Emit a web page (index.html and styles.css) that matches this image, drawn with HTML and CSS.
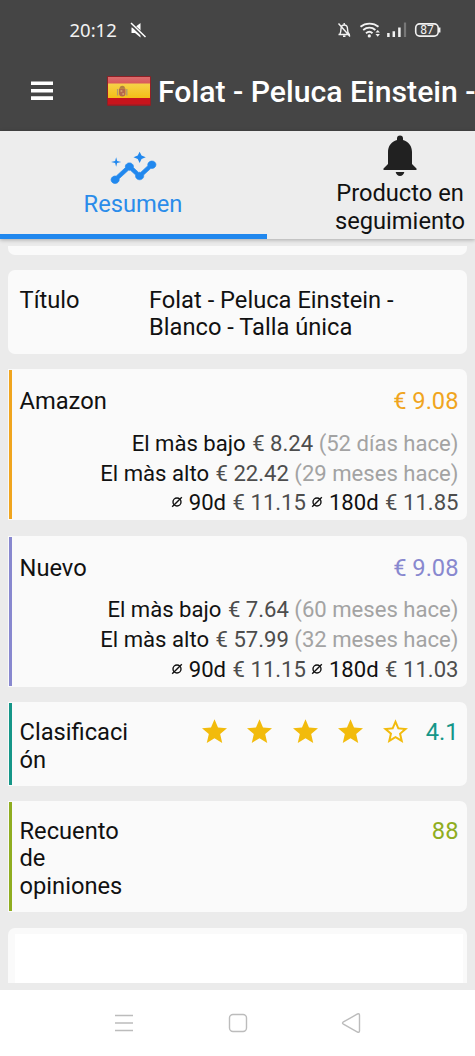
FILE: index.html
```html
<!DOCTYPE html>
<html lang="es">
<head>
<meta charset="utf-8">
<title>Folat - Peluca Einstein</title>
<link rel="stylesheet" href="styles.css">
</head>
<body>
<div class="screen">
  <header class="top">
    <div class="status">
      <span class="clock">20:12</span>
      <svg class="mute" width="17" height="17" viewBox="0 0 17 17"><path d="M1.500 5.500h3.200L10.500 1v14.500L5 11H1.500z" fill="#fff"/><path d="M0 .8 15.500 15.600" stroke="#454545" stroke-width="3.600"/><path d="M1 1 15.500 15" stroke="#fff" stroke-width="1.500"/></svg>
      <svg class="signals" width="106" height="18" viewBox="0 0 106 18" fill="none" stroke="#f2f2f2">
        <path d="M2.500 13.500h11.500M4 13c1-2 .8-3.500 1-5.500C5.200 5.500 6.500 4 8.200 4S11.500 5.500 11.500 8c0 2 .3 3.500 1.500 5M8.200 2v2M2.500 2.500l11.500 13M7 15.200h2.500" stroke-width="1.400"/>
        <path d="M24.500 5.800c5-4.200 13-4.200 18 0M27.200 9c3.800-3 8.700-3 12.200 0M30 12.200c2-1.700 4.700-1.700 6.500 0" stroke-width="1.900"/>
        <circle cx="33.300" cy="14.900" r="1.600" fill="#f2f2f2" stroke="none"/>
        <path d="M39.500 11.500 41.700 9l2.200 2.500zM39.500 13l2.200 2.700 2.200-2.700z" fill="#f2f2f2" stroke="none"/>
        <path d="M52.400 12v4M57.800 10.200V16M63.400 6.500V16" stroke-width="2.500"/>
        <path d="M69 1.500V16" stroke="#777" stroke-width="2.200"/>
        <rect x="79.700" y="2.900" width="22.500" height="12.200" rx="4" stroke-width="1.600"/>
        <path d="M103.700 6.500v5" stroke-width="1.500"/>
        <text x="91" y="13" text-anchor="middle" class="battery">87</text>
      </svg>
    </div>
    <div class="appbar">
      <svg class="burger" width="22" height="20" viewBox="0 0 22 20"><path d="M0 2.200h22M0 9.700h22M0 17.100h22" stroke="#fff" stroke-width="3.600"/></svg>
      <svg class="flag" width="44" height="30" viewBox="0 0 44 30">
        <defs>
          <linearGradient id="red" x2="0" y2="1"><stop stop-color="#dc6c6d"/><stop offset="1" stop-color="#d85758"/></linearGradient>
          <linearGradient id="gold" x2="0" y2="1"><stop stop-color="#f6d249"/><stop offset="1" stop-color="#f4bf16"/></linearGradient>
        </defs>
        <rect width="44" height="30" rx="1" fill="#8f2026"/>
        <path d="M1 1h42v7H1z" fill="url(#red)"/><path d="M1 7.500h42V22H1z" fill="url(#gold)"/><path d="M1 22h42v6.500H1z" fill="#c8141c"/>
        <path d="M12 12.500h6.500v5q0 3-3.200 3T12 17.500z" fill="#b5684c"/><path d="M12.800 11q2.500-2.500 5 0v1.800h-5z" fill="#b08040"/><path d="M10.600 13v6.500M19.800 13v6.500" stroke="#b09a70" stroke-width="1.300"/><path d="M13.500 14h1.800v2h-1.800zM15.300 17h1.800v2h-1.800z" fill="#d09a68"/>
      </svg>
      <h1 class="heading">Folat - Peluca Einstein -</h1>
    </div>
  </header>

  <nav class="tabs">
    <div class="tab active">
      <svg class="insights" width="49" height="45" viewBox="0 0 24 24" preserveAspectRatio="none" fill="currentColor"><path d="M21 8c-1.450 0-2.260 1.440-1.930 2.510l-3.550 3.560c-.3-.09-.74-.09-1.040 0l-2.550-2.550C12.270 10.450 11.460 9 10 9c-1.450 0-2.270 1.440-1.930 2.520l-4.560 4.550C2.440 15.740 1 16.550 1 18c0 1.100.9 2 2 2 1.450 0 2.260-1.440 1.930-2.510l4.550-4.560c.3.090.74.090 1.040 0l2.550 2.550C12.730 16.550 13.540 18 15 18c1.450 0 2.270-1.440 1.930-2.520l3.560-3.550C21.560 12.260 23 11.450 23 10c0-1.100-.9-2-2-2z" stroke="currentColor" stroke-width=".35"/><path d="m15 9 .94-2.070L18 6l-2.060-.93L15 3l-.92 2.070L12 6l2.080.93zM3.500 11 4 9l2-.5L4 8l-.5-2L3 8l-2 .5L3 9z"/></svg>
      <span>Resumen</span>
    </div>
    <div class="tab">
      <svg class="bell" width="34" height="41" viewBox="0 0 34 41" fill="#212121"><path d="M14 5V3.500a3 3 0 0 1 6 0V5c5.700 1.500 9 6.300 9 12v12l4.500 4.500V35H.5v-1.500L5 29V17C5 11.300 8.300 6.500 14 5z"/><path d="M12.700 37h8.600c-.3 2.300-2.100 4-4.300 4s-4-1.700-4.300-4z"/></svg>
      <span>Producto en<br>seguimiento</span>
    </div>
  </nav>

  <main class="content">
    <section class="card previous"></section>
    <section class="card title-card">
      <div class="label">Título</div>
      <div class="value">Folat - Peluca Einstein -<br>Blanco - Talla única</div>
    </section>
    <section class="card price amazon">
      <div class="row"><span>Amazon</span><span class="accent">€ 9.08</span></div>
      <div class="stats">
        <div>El màs bajo <b>€ 8.24</b> <i>(52 días hace)</i></div>
        <div>El màs alto <b>€ 22.42</b> <i>(29 meses hace)</i></div>
        <div><svg class="avg" viewBox="0 0 12 12"><circle cx="6" cy="6" r="4"/><path d="M1.200 10.800 10.800 1.200"/></svg> 90d <b>€ 11.15</b> <svg class="avg" viewBox="0 0 12 12"><circle cx="6" cy="6" r="4"/><path d="M1.200 10.800 10.800 1.200"/></svg> 180d <b>€ 11.85</b></div>
      </div>
    </section>
    <section class="card price new">
      <div class="row"><span>Nuevo</span><span class="accent">€ 9.08</span></div>
      <div class="stats">
        <div>El màs bajo <b>€ 7.64</b> <i>(60 meses hace)</i></div>
        <div>El màs alto <b>€ 57.99</b> <i>(32 meses hace)</i></div>
        <div><svg class="avg" viewBox="0 0 12 12"><circle cx="6" cy="6" r="4"/><path d="M1.200 10.800 10.800 1.200"/></svg> 90d <b>€ 11.15</b> <svg class="avg" viewBox="0 0 12 12"><circle cx="6" cy="6" r="4"/><path d="M1.200 10.800 10.800 1.200"/></svg> 180d <b>€ 11.03</b></div>
      </div>
    </section>
    <section class="card rating">
      <div class="label">Clasificaci<br>ón</div>
      <div class="stars">
        <svg viewBox="2 2 20 19"><path d="M12 17.270 18.180 21l-1.640-7.030L22 9.240l-7.190-.61L12 2 9.190 8.630 2 9.240l5.460 4.730L5.820 21z"/></svg>
        <svg viewBox="2 2 20 19"><path d="M12 17.270 18.180 21l-1.640-7.030L22 9.240l-7.190-.61L12 2 9.190 8.630 2 9.240l5.460 4.730L5.820 21z"/></svg>
        <svg viewBox="2 2 20 19"><path d="M12 17.270 18.180 21l-1.640-7.030L22 9.240l-7.190-.61L12 2 9.190 8.630 2 9.240l5.460 4.730L5.820 21z"/></svg>
        <svg viewBox="2 2 20 19"><path d="M12 17.270 18.180 21l-1.640-7.030L22 9.240l-7.190-.61L12 2 9.190 8.630 2 9.240l5.460 4.730L5.820 21z"/></svg>
        <svg viewBox="2 2 20 19"><path d="m22 9.240-7.190-.62L12 2 9.190 8.630 2 9.240l5.460 4.730L5.820 21 12 17.270 18.180 21l-1.630-7.030zM12 15.400l-3.760 2.270 1-4.280-3.320-2.880 4.380-.38L12 6.100l1.710 4.040 4.380.38-3.320 2.880 1 4.280z"/></svg>
        <span class="accent">4.1</span>
      </div>
    </section>
    <section class="card reviews">
      <div class="label">Recuento<br>de<br>opiniones</div>
      <span class="accent">88</span>
    </section>
    <section class="card chart"><div class="canvas"></div></section>
  </main>

  <footer class="navbar">
    <svg width="20" height="20" viewBox="0 0 20 20"><path d="M1 2.500h18M1 10h18M1 17.500h18"/></svg>
    <svg width="20" height="20" viewBox="0 0 20 20"><rect x="1.500" y="1.500" width="17" height="17" rx="3.500"/></svg>
    <svg width="20" height="20" viewBox="0 0 20 20"><path d="M2 9.200 16.500 1q2-.8 2 1.200v15.600q0 2-2 1.200L2 10.800q-1-.8 0-1.600z"/></svg>
  </footer>
</div>
</body>
</html>
```
FILE: styles.css
```css
* { box-sizing: border-box; }
body { margin: 0; font-family: Roboto, "Liberation Sans", sans-serif; color: #111; }
svg { display: block; flex: none; }
.screen { width: 475px; height: 1056px; display: flex; flex-direction: column; overflow: hidden; background: #ebebeb; font-size: 23.700px; line-height: 27.700px; }

.top { height: 131px; flex: none; background: #454545; color: #fff; overflow: hidden; }
.status { display: flex; height: 60px; padding: 0 33px 0 69.500px; align-items: center; color: #f2f2f2; }
.clock { font-family: "Noto Sans", sans-serif; font-size: 18.500px; line-height: 24px; }
.mute { margin-left: 13px; }
.signals { margin-left: auto; }
.battery { font: 12px Roboto, sans-serif; fill: #f2f2f2; stroke: none; }
.appbar { display: flex; align-items: center; height: 62px; padding-left: 30.500px; }
.burger { width: 22px; }
.flag { margin-left: 54.500px; }
.heading { margin: 2px 0 0 7px; font-size: 30.200px; line-height: 36px; font-weight: 500; white-space: nowrap; flex: none; }

.tabs { display: flex; flex: none; height: 108px; background: #ededed; box-shadow: 0 1px 4px rgba(0,0,0,.28); z-index: 1; }
.tab { width: 267px; flex: none; display: flex; flex-direction: column; align-items: center; text-align: center; padding: 4px 1px 0 0; }
.tab .bell { margin-bottom: 4px; }
.tab.active { color: #2a8cea; border-bottom: 5px solid #2188ee; padding-top: 15px; }
.insights { color: #2188ee; }

.content { flex: none; height: 744px; padding: 0 8px; display: flex; flex-direction: column; gap: 15.200px; overflow: hidden; }
.card { flex: none; background: #fafafa; border-radius: 7px; padding: 16.500px 8.500px 0 11.500px; display: flex; overflow: hidden; }
.card.previous { height: 9px; margin-top: 7px; padding: 0; border-radius: 0 0 7px 7px; }
.label { width: 129.500px; }
.title-card { height: 83.600px; }
.price { display: block; height: 151.500px; padding-top: 19px; }
.row { display: flex; justify-content: space-between; }
.stats { margin-top: 13px; text-align: right; font-size: 22.100px; line-height: 29.900px; white-space: nowrap; }
.stats b { font-weight: 400; color: #4d4d4d; margin-left: 1px; }
.stats i { font-style: normal; color: #a3a3a3; }
.avg { display: inline-block; width: 12px; height: 12px; fill: none; stroke: #111; stroke-width: 1.400px; vertical-align: 2px; }
.rating { height: 83.600px; }
.reviews { height: 111.300px; }
.rating, .reviews { justify-content: space-between; }
.amazon, .new, .rating, .reviews { background: linear-gradient(var(--accent), var(--accent)) 1px 1px / 3px calc(100% - 2px) no-repeat #fafafa; border-radius: 0 7px 7px 0; }
.accent { color: var(--accent); }
.amazon { --accent: #f0a51e; }
.new { --accent: #8888cf; }
.rating { --accent: #159688; }
.reviews { --accent: #8fad20; }
.stars { display: flex; gap: 20.300px; height: 28px; align-items: center; }
.stars svg { width: 25px; height: 24px; fill: #f2bb0c; margin-top: -4px; }
.stars .accent { margin-left: -3px; }
.chart { height: 56px; border-radius: 7px 7px 0 0; padding: 6px 4px 0 7px; }
.canvas { flex: 1; background: #fff; }

.navbar { flex: none; margin-top: 7px; height: 66px; background: #fff; display: flex; justify-content: center; gap: 93.500px; align-items: center; fill: none; stroke: #bcbcbc; stroke-width: 1.400px; }
```
